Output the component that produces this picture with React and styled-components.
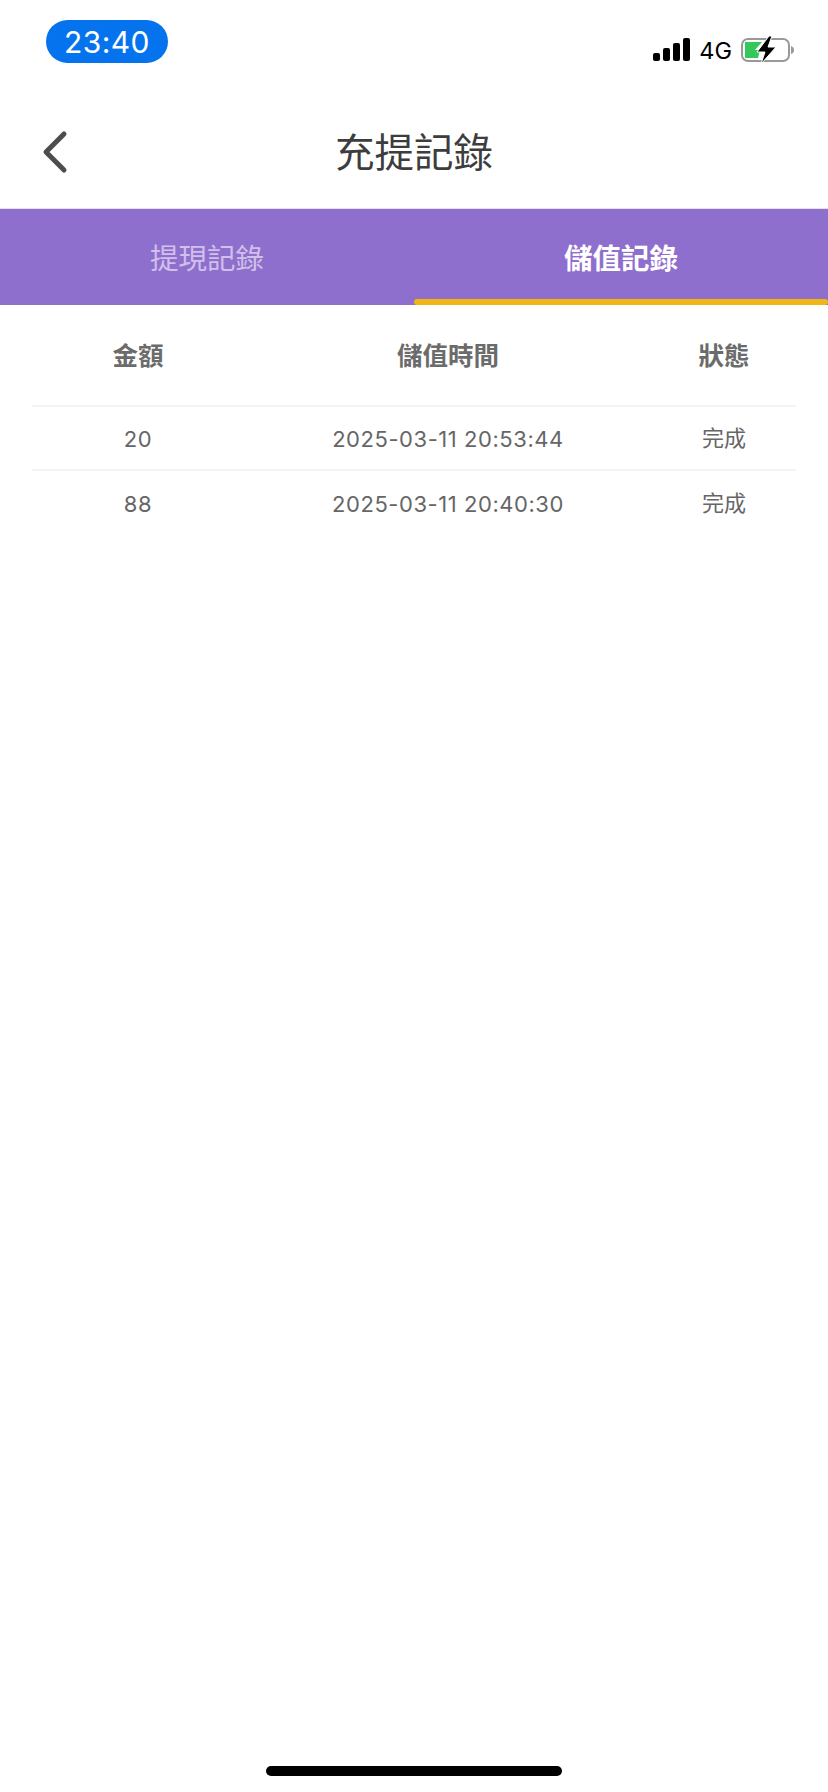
import React from 'react'
import styled, { createGlobalStyle } from 'styled-components'

const GlobalStyle = createGlobalStyle`
  html, body {
    margin: 0;
    padding: 0;
    background: #fff;
  }
  * {
    box-sizing: border-box;
  }
`

const cjk = `Inter, "Noto Sans CJK TC", sans-serif`

const Page = styled.div`
  width: 828px;
  height: 1792px;
  display: flex;
  flex-direction: column;
  background: #fff;
  font-family: ${cjk};
  overflow: hidden;
`
const StatusBar = styled.div`
  height: 76px;
  display: flex;
  justify-content: space-between;
  padding: 20px 33px 0 46px;
`
const TimePill = styled.div`
  width: 122px;
  height: 43px;
  border-radius: 22px;
  background: #0573ee;
  color: #fff;
  font-family: Inter, sans-serif;
  font-size: 30px;
  line-height: 44px;
  letter-spacing: 0.4px;
  text-align: center;
`
const StatusIcons = styled.div`
  display: flex;
  align-items: center;
  gap: 9px;
  height: 60px;
`
const Network = styled.span`
  font-family: Inter, sans-serif;
  font-size: 23.5px;
  color: #000;
`
const Header = styled.div`
  height: 132px;
  padding-top: 20px;
  display: flex;
  align-items: center;
  justify-content: center;
  position: relative;
`
const Back = styled.svg`
  position: absolute;
  left: 41px;
  top: 54px;
`
const Title = styled.h1`
  margin: 0 0 5px;
  font-size: 39.5px;
  font-weight: 400;
  color: #3d3d3d;
`
const Tabs = styled.div`
  height: 97px;
  display: flex;
  background: #8f6fcd;
  border-top: 1px solid #e4e0ea;
`
const Tab = styled.div`
  flex: 1;
  display: flex;
  align-items: center;
  justify-content: center;
  font-size: 28.5px;
  padding-bottom: 2px;
  position: relative;
  font-weight: ${({ $active }) => ($active ? 700 : 400)};
  color: ${({ $active }) => ($active ? '#fff' : '#d0c0ea')};
  ${({ $active }) => $active && `
    &::after {
      content: '';
      position: absolute;
      left: 0;
      right: 0;
      bottom: 0;
      height: 6px;
      border-radius: 3px;
      background: #f0b616;
    }
  `}
`
const Table = styled.div`
  margin: 0 32px;
`
const Row = styled.div`
  display: grid;
  grid-template-columns: 212px 408px 144px;
  align-items: center;
  text-align: center;
  height: ${({ $head }) => ($head ? '102px' : '64px')};
  border-bottom: ${({ $last }) => ($last ? 'none' : '2px solid #f4f4f4')};
  padding-bottom: ${({ $head }) => ($head ? '4px' : '0')};
`
const HeadCell = styled.div`
  font-size: 25.5px;
  font-weight: 700;
  color: #6b6b6b;
`
const Cell = styled.div`
  font-size: 22px;
  line-height: 30px;
  color: #666;
  letter-spacing: ${({ $cjk }) => ($cjk ? '0' : '0.55px')};
  padding-top: ${({ $cjk }) => ($cjk ? '0' : '2px')};
`
const HomeBar = styled.div`
  width: 296px;
  height: 10px;
  border-radius: 5px;
  background: #000;
  margin: auto auto 16px;
`

const rows = [
  { amount: '20', time: '2025-03-11 20:53:44', status: '完成' },
  { amount: '88', time: '2025-03-11 20:40:30', status: '完成' },
]

const Signal = () => (
  <svg width="37" height="24" viewBox="0 0 37 24">
    <rect x="0" y="15" width="7" height="8" rx="2" fill="#000" />
    <rect x="10" y="10" width="7" height="13" rx="2" fill="#000" />
    <rect x="20" y="5" width="7" height="18" rx="2" fill="#000" />
    <rect x="30" y="0" width="7" height="23" rx="2" fill="#000" />
  </svg>
)

const Battery = () => (
  <svg width="54" height="28" viewBox="0 0 54 28">
    <rect x="1" y="3" width="47" height="22" rx="6" fill="none" stroke="#999" strokeWidth="2" />
    <path d="M50 10 q3 1 3 4 t-3 4 z" fill="#999" />
    <path d="M4 6 h17 l-7 8 h5 l-2 8 h-13 z" fill="#34c759" />
    <path d="M28 0 L16 16 h8 l-4 12 L35 11 h-8 l4 -11 z" fill="#000" stroke="#fff" strokeWidth="1" />
  </svg>
)

const App = () => {
  return (
    <Page>
      <GlobalStyle />
      <StatusBar>
        <TimePill>23:40</TimePill>
        <StatusIcons>
          <Signal />
          <Network>4G</Network>
          <Battery />
        </StatusIcons>
      </StatusBar>
      <Header>
        <Back width="28" height="44" viewBox="0 0 28 44">
          <path d="M23 4 L5 22 L23 40" fill="none" stroke="#4d4d4d" strokeWidth="5" strokeLinecap="round" strokeLinejoin="round" />
        </Back>
        <Title>充提記錄</Title>
      </Header>
      <Tabs>
        <Tab>提現記錄</Tab>
        <Tab $active>儲值記錄</Tab>
      </Tabs>
      <Table>
        <Row $head>
          <HeadCell>金額</HeadCell>
          <HeadCell>儲值時間</HeadCell>
          <HeadCell>狀態</HeadCell>
        </Row>
        {rows.map((row, i) => (
          <Row key={row.time} $last={i === rows.length - 1}>
            <Cell>{row.amount}</Cell>
            <Cell>{row.time}</Cell>
            <Cell $cjk>{row.status}</Cell>
          </Row>
        ))}
      </Table>
      <HomeBar />
    </Page>
  )
}

export default App
